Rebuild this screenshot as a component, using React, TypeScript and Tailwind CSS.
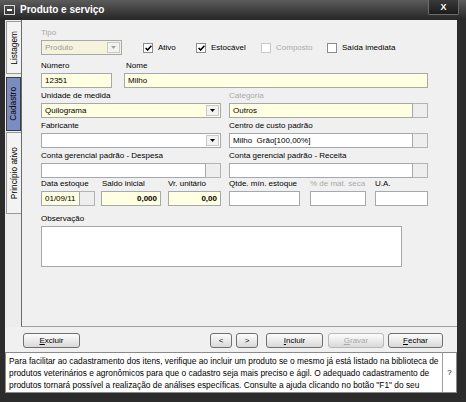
import React from "react";

function Label({ children, muted }: { children?: React.ReactNode; muted?: boolean }) {
  return (
    <div className={`h-[11px] leading-[8px] whitespace-nowrap ${muted ? "text-[#a9a9a9]" : "text-black"}`}>
      {children}
    </div>
  );
}

function Arrow({ muted }: { muted?: boolean }) {
  return (
    <div className="w-[13px] h-[11px] mr-[1px] border border-[#c9c9c9] bg-[#f2f2f2] flex items-center justify-center">
      <svg width="5" height="3" viewBox="0 0 5 3">
        <path d="M0 0h5L2.5 3z" fill={muted ? "#a0a0a0" : "#000"} />
      </svg>
    </div>
  );
}

function Box({
  className = "",
  children,
  right,
  combo,
  mutedArrow,
}: {
  className?: string;
  children?: React.ReactNode;
  right?: boolean;
  combo?: boolean;
  mutedArrow?: boolean;
}) {
  return (
    <div className={`h-[15px] border border-[#a5a9ae] flex items-center ${className}`}>
      <div className={`flex-1 px-[3px] whitespace-nowrap leading-none ${right ? "text-right" : ""}`}>{children}</div>
      {combo && <Arrow muted={mutedArrow} />}
    </div>
  );
}

function SideBtn() {
  return <div className="w-[15px] h-[15px] border border-l-0 border-[#b3b3b3] bg-[#eeeeee] shrink-0" />;
}

function Check({ label, checked, disabled, className = "" }: { label: string; checked?: boolean; disabled?: boolean; className?: string }) {
  return (
    <div className={`flex items-center ${className}`}>
      <div className={`w-[10px] h-[10px] border bg-white flex items-center justify-center ${disabled ? "border-[#c8c8c8]" : "border-[#8c8c8c]"}`}>
        {checked && (
          <svg width="7" height="6" viewBox="0 0 7 6">
            <path d="M0.6 3 L2.6 5 L6.4 0.8" stroke="#000" strokeWidth="1.6" fill="none" />
          </svg>
        )}
      </div>
      <span className={`ml-[5px] whitespace-nowrap ${disabled ? "text-[#a9a9a9]" : ""}`}>{label}</span>
    </div>
  );
}

function Btn({ children, className = "", disabled }: { children: React.ReactNode; className?: string; disabled?: boolean }) {
  return (
    <div
      className={`h-[15px] rounded-[3px] border flex items-center justify-center bg-linear-to-b from-[#fdfdfd] to-[#d9d9d9] ${
        disabled ? "border-[#b8b8b8] text-[#a8a8a8]" : "border-[#707070] text-black"
      } ${className}`}
    >
      {children}
    </div>
  );
}

function Tab({ label, active, className = "" }: { label: string; active?: boolean; className?: string }) {
  return (
    <div
      className={`w-[15px] ml-[1px] flex items-center justify-center border ${
        active ? "bg-[#7d8cc0] border-[#3d3d3d]" : "bg-[#f3f3f3] border-[#9a9a9a] border-r-0"
      } ${className}`}
    >
      <span className="[writing-mode:vertical-rl] rotate-180 whitespace-nowrap leading-none text-[8.3px]">{label}</span>
    </div>
  );
}

export default function App() {
  const yellow = "bg-[#ffffe1]";
  return (
    <div className="w-[466px] h-[402px] bg-[#2c2c2c] flex flex-col font-['Liberation_Sans',Arial,sans-serif] text-[8px] text-black overflow-hidden">
      {/* title bar */}
      <div className="h-[20px] flex items-center bg-linear-to-b from-[#5c5c5c] to-[#262626] relative">
        <div className="ml-[4px] w-[11px] h-[10px] border border-[#d8d8d8] flex items-center justify-center">
          <div className="w-[5px] h-[2px] bg-white" />
        </div>
        <span className="ml-[5px] text-white font-bold text-[10px] leading-none">Produto e serviço</span>
        <div className="absolute right-[7px] top-0 w-[31px] h-[15px] border border-[#6c6c6c] border-t-0 rounded-b-[2px] bg-linear-to-b from-[#3a3a3a] to-[#1c1c1c] flex items-center justify-center">
          <span className="text-white font-bold text-[9px] leading-none">X</span>
        </div>
      </div>

      <div className="flex-1 flex flex-col pl-[5px] pr-[9px] pb-[9px]">
        {/* top area: tabs + panel */}
        <div className="h-[307px] flex bg-[#ededed]">
          <div className="w-[16px] flex flex-col pt-[1px]">
            <Tab label="Listagem" className="h-[53px]" />
            <Tab label="Cadastro" active className="h-[54px] mt-[3px]" />
            <Tab label="Princípio ativo" className="h-[82px] mt-[1px]" />
          </div>
          <div className="flex-1 bg-[#f0f0f0] border-l border-b border-[#6b6b6b] border-b-[#a0a0a0] pl-[19px] pt-[9px]">
            {/* row 1 */}
            <div className="flex items-end">
              <div className="w-[81px]">
                <Label muted>Tipo</Label>
                <Box className="bg-[#f5f3dc] text-[#9a9a9a]" combo mutedArrow>
                  Produto
                </Box>
              </div>
              <div className="ml-[21px] h-[15px] flex items-center">
                <Check label="Ativo" checked className="w-[53px]" />
                <Check label="Estocável" checked className="w-[65px]" />
                <Check label="Composto" disabled className="w-[66px]" />
                <Check label="Saída imediata" />
              </div>
            </div>

            {/* row 2 */}
            <div className="flex mt-[7px]">
              <div className="w-[71px]">
                <Label>Número</Label>
                <Box className={yellow}>12351</Box>
              </div>
              <div className="w-[304px] ml-[12px]">
                <Label>
                  <span className="ml-[2px]">Nome</span>
                </Label>
                <Box className={yellow}>Milho</Box>
              </div>
            </div>

            {/* row 3 */}
            <div className="flex mt-[4px] gap-[8px]">
              <div className="w-[180px]">
                <Label>Unidade de medida</Label>
                <Box className={yellow} combo>
                  Quilograma
                </Box>
              </div>
              <div className="w-[199px]">
                <Label muted>Categoria</Label>
                <div className="flex">
                  <Box className={`${yellow} flex-1`}>Outros</Box>
                  <SideBtn />
                </div>
              </div>
            </div>

            {/* row 4 */}
            <div className="flex mt-[4px] gap-[8px]">
              <div className="w-[180px]">
                <Label>Fabricante</Label>
                <Box className="bg-white" combo />
              </div>
              <div className="w-[199px]">
                <Label>Centro de custo padrão</Label>
                <div className="flex">
                  <Box className="bg-white flex-1">Milho&nbsp; Grão[100,00%]</Box>
                  <SideBtn />
                </div>
              </div>
            </div>

            {/* row 5 */}
            <div className="flex mt-[4px] gap-[8px]">
              <div className="w-[180px]">
                <Label>Conta gerencial padrão - Despesa</Label>
                <div className="flex">
                  <Box className="bg-white flex-1" />
                  <SideBtn />
                </div>
              </div>
              <div className="w-[199px]">
                <Label>Conta gerencial padrão - Receita</Label>
                <div className="flex">
                  <Box className="bg-white flex-1" />
                  <SideBtn />
                </div>
              </div>
            </div>

            {/* row 6 */}
            <div className="flex mt-[2px]">
              <div className="w-[53px]">
                <Label>Data estoque</Label>
                <div className="flex">
                  <Box className={`${yellow} flex-1`}>01/09/11</Box>
                  <SideBtn />
                </div>
              </div>
              <div className="w-[60px] ml-[7px]">
                <Label>
                  <span className="ml-[1px]">Saldo inicial</span>
                </Label>
                <Box className={yellow} right>
                  <span className="font-bold">0,000</span>
                </Box>
              </div>
              <div className="w-[53px] ml-[7px]">
                <Label>Vr. unitário</Label>
                <Box className={yellow} right>
                  <span className="font-bold">0,00</span>
                </Box>
              </div>
              <div className="w-[71px] ml-[8px]">
                <Label>Qtde. mín. estoque</Label>
                <Box className="bg-white" />
              </div>
              <div className="w-[56px] ml-[10px]">
                <Label muted>% de mat. seca</Label>
                <Box className="bg-white" />
              </div>
              <div className="w-[53px] ml-[9px]">
                <Label>U.A.</Label>
                <Box className="bg-white" />
              </div>
            </div>

            {/* observação */}
            <div className="mt-[9px] w-[361px]">
              <Label>Observação</Label>
              <div className="h-[41px] border border-[#a5a9ae] bg-white" />
            </div>
          </div>
        </div>

        {/* button bar */}
        <div className="h-[25px] bg-[#f0f0f0] flex items-start pt-[6px] pl-[18px] pr-[14px]">
          <Btn className="w-[57px]">
            <span>
              <u>E</u>xcluir
            </span>
          </Btn>
          <div className="flex-1" />
          <Btn className="w-[22px]">&lt;</Btn>
          <Btn className="w-[22px] ml-[4px]">&gt;</Btn>
          <Btn className="w-[57px] ml-[8px]">
            <span>
              <u>I</u>ncluir
            </span>
          </Btn>
          <Btn className="w-[56px] ml-[5px]" disabled>
            <span>
              <u>G</u>ravar
            </span>
          </Btn>
          <Btn className="w-[55px] ml-[4px]">
            <span>
              <u>F</u>echar
            </span>
          </Btn>
        </div>

        {/* help */}
        <div className="h-[41px] flex bg-white border border-[#8a8a8a]">
          <div className="flex-1 pl-[3px] pt-[2px] leading-[12px] text-[8.35px] text-black">
            <div className="whitespace-nowrap">
              Para facilitar ao cadastramento dos itens, verifique ao incluir um produto se o mesmo já está listado na biblioteca de
            </div>
            <div className="whitespace-nowrap">
              produtos veterinários e agronômicos para que o cadastro seja mais preciso e ágil. O adequado cadastramento de
            </div>
            <div className="whitespace-nowrap">
              produtos tornará possível a realização de análises específicas. Consulte a ajuda clicando no botão "F1" do seu
            </div>
          </div>
          <div className="w-[14px] border-l border-[#a0a0a0] flex items-center justify-center text-[8px]">?</div>
        </div>
      </div>
    </div>
  );
}
